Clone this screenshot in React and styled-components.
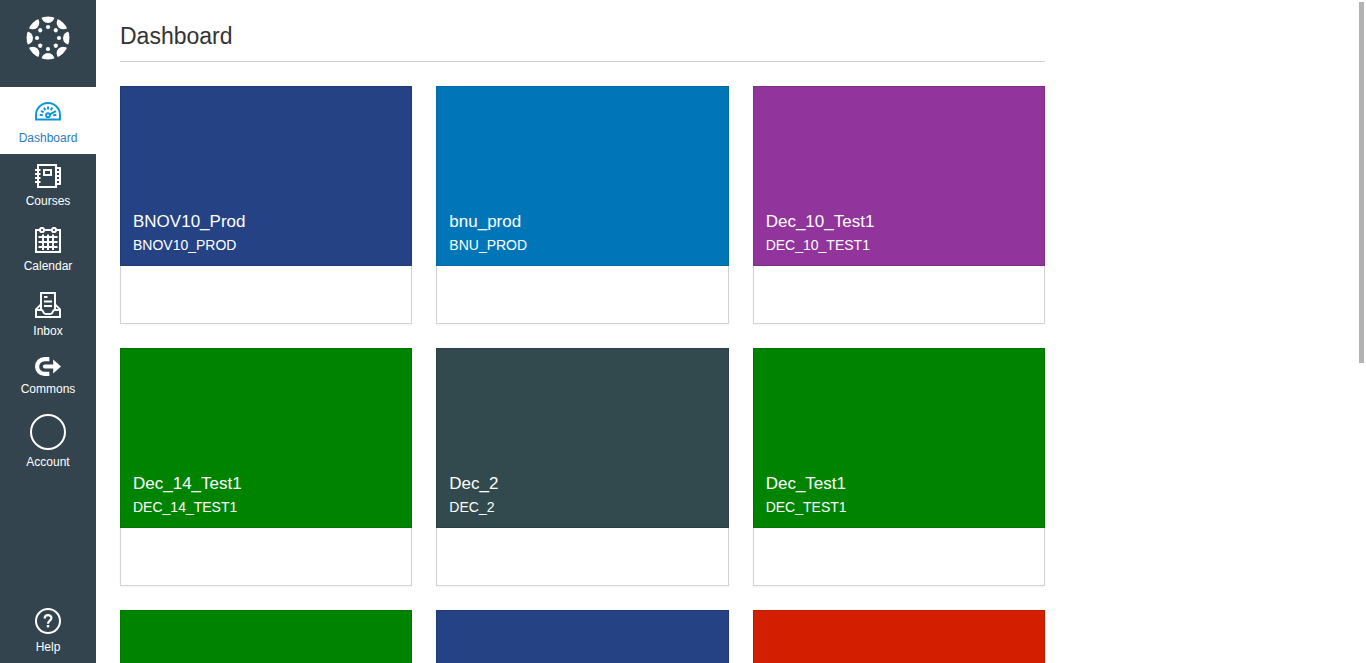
import React from "react";
import styled, { createGlobalStyle } from "styled-components";

const GlobalStyle = createGlobalStyle`
  *, *::before, *::after { box-sizing: border-box; }
  body {
    margin: 0;
    background: #fff;
    color: #333;
    font-family: "Liberation Sans", Arial, sans-serif;
    overflow: hidden;
  }
`;

const Shell = styled.div`
  position: relative;
  display: grid;
  grid-template-columns: 96px minmax(0, 1fr);
  height: 100vh;
`;

const Sidebar = styled.header`
  display: flex;
  flex-direction: column;
  min-height: 0;
  background: #34444f;
`;

const LogoLink = styled.a`
  display: flex;
  justify-content: center;
  height: 87px;
  padding-top: 16px;
  flex: none;
`;

const NavList = styled.ul`
  display: flex;
  flex-direction: column;
  flex: 1;
  margin: 0;
  padding: 0;
  list-style: none;
`;

const NavItem = styled.li`
  margin-top: ${(p) => (p.$last ? "auto" : "0")};
`;

const NavLink = styled.a`
  display: flex;
  flex-direction: column;
  align-items: center;
  gap: 5px;
  padding: 10px 0 8px;
  font-size: 12px;
  line-height: 16px;
  text-decoration: none;
  color: ${(p) => (p.$active ? "#2d7bbf" : "#fff")};
  background: ${(p) => (p.$active ? "#fff" : "transparent")};

  svg {
    display: block;
    color: ${(p) => (p.$active ? "#0a96d6" : "#fff")};
  }
`;

const Avatar = styled.span`
  width: 36px;
  height: 36px;
  margin: -1px 0;
  border: 2px solid #fff;
  border-radius: 50%;
`;

const Main = styled.main`
  min-width: 0;
  padding: 0 321px 24px 24px;
  overflow-y: auto;
  scrollbar-width: none;
`;

const PageTitle = styled.h1`
  margin: 0 0 24px;
  padding: 20px 0 9px;
  border-bottom: 1px solid #d3d3d3;
  font-size: 23px;
  line-height: 32px;
  font-weight: 400;
`;

const CardGrid = styled.div`
  display: grid;
  grid-template-columns: repeat(3, minmax(0, 1fr));
  gap: 24px;
`;

const Card = styled.article`
  display: flex;
  flex-direction: column;
  box-shadow: 0 1px 2px rgba(0, 0, 0, 0.05);
`;

const CardHero = styled.a`
  display: flex;
  flex-direction: column;
  justify-content: flex-end;
  height: 180px;
  padding: 0 12px 10px;
  border: 1px solid rgba(0, 0, 0, 0.1);
  background: ${(p) => p.$color};
  color: #fff;
  text-decoration: none;
`;

const CardTitle = styled.h2`
  margin: 0;
  font-size: 17px;
  line-height: 26px;
  font-weight: 400;
`;

const CardCode = styled.span`
  font-size: 14px;
  line-height: 20px;
`;

const CardFooter = styled.div`
  height: 58px;
  border: 1px solid #d3d3d3;
  border-top: 0;
`;

const ScrollThumb = styled.div`
  position: absolute;
  top: 2px;
  right: 2px;
  width: 5px;
  height: 54.5%;
  background: #b2b2b2;
`;

const ANGLES = [0, 45, 90, 135, 180, 225, 270, 315];

function Logo() {
  return (
    <svg width="44" height="44" viewBox="-22 -22 44 44" fill="#fff" aria-hidden="true">
      <clipPath id="logo-disc">
        <circle r="21.4" />
      </clipPath>
      <g clipPath="url(#logo-disc)">
        {ANGLES.map((a) => (
          <circle key={a} cy="-21.6" r="6.6" transform={`rotate(${a})`} />
        ))}
      </g>
      {ANGLES.map((a) => (
        <circle key={a} cy="-11" r="2.1" transform={`rotate(${a})`} />
      ))}
    </svg>
  );
}

function DashboardIcon() {
  return (
    <svg width="26" height="28" viewBox="0 -5 26 28" fill="none" stroke="currentColor" strokeWidth="1.9" aria-hidden="true">
      <path d="M1 17.5V13a12 12 0 0 1 24 0v4.5z" />
      <circle cx="13" cy="13.2" r="1.9" />
      <path d="M14.8 12.3 20.9 9.2M4.6 12.8l3.2.4M18.2 13.2l3.2-.4M6 8.9l2.6 1.5M8.9 5.6l1.5 2.7M13 4.4v3.2M17.3 5.5l-1.4 2.7" />
    </svg>
  );
}

function CoursesIcon() {
  return (
    <svg width="26" height="24" viewBox="0 0 26 24" fill="none" stroke="currentColor" strokeWidth="2" aria-hidden="true">
      <path d="M3 1h18v22H3z" />
      <path d="M9 6h7v5H9z" />
      <path d="M0 6h5.5M0 10h5.5M0 14h5.5M0 18h5.5" />
      <path d="M22 4h3v16h-3M22 8h3M22 12h3M22 16h3" />
    </svg>
  );
}

function CalendarIcon() {
  return (
    <svg width="26" height="26" viewBox="0 0 26 26" fill="none" stroke="currentColor" strokeWidth="2" aria-hidden="true">
      <path d="M4.5 3H1v22h24V3h-3.5M9.5 3h7" />
      <circle cx="7" cy="3" r="2.1" />
      <circle cx="19" cy="3" r="2.1" />
      <path d="M8 7.5v15.5M13 7.5v15.5M18 7.5v15.5M3.5 10h19M3.5 15h19M3.5 20h19" />
    </svg>
  );
}

function InboxIcon() {
  return (
    <svg width="26" height="26" viewBox="0 0 26 26" fill="none" stroke="currentColor" strokeWidth="2" aria-hidden="true">
      <path d="M6 17V1h14v16" />
      <path d="M9 5h3.5M9 9.5h8M9 14h8" />
      <path d="M6 12.4 1 17.4V25h24v-7.6l-5-5" />
      <path d="M1.5 18H6.5c2 0 1.5 4 4 4h5c2.5 0 2-4 4-4h5" />
    </svg>
  );
}

function CommonsIcon() {
  return (
    <svg width="26" height="19" viewBox="0 0 26 19" fill="currentColor" aria-hidden="true">
      <path d="M14.3 0H9.5a9.5 9.5 0 0 0 0 19h4.8v-4.2H9.5a5.3 5.3 0 0 1 0-10.6h4.8z" />
      <path d="M10 7.4h8.2v-5L26 9.5l-7.8 7.1v-5H10a2.1 2.1 0 0 1 0-4.2z" />
    </svg>
  );
}

function HelpIcon() {
  return (
    <svg width="26" height="26" viewBox="0 0 26 26" fill="none" stroke="currentColor" strokeWidth="2" aria-hidden="true">
      <circle cx="13" cy="13" r="12" />
      <path d="M9.7 10.6c0-4.6 6.7-4.4 6.7-.6 0 2.6-3.4 2.6-3.4 5.7" strokeWidth="2.2" />
      <path d="M13 17v2.4" strokeWidth="2.4" />
    </svg>
  );
}

const NAV = [
  { label: "Dashboard", icon: <DashboardIcon />, active: true },
  { label: "Courses", icon: <CoursesIcon /> },
  { label: "Calendar", icon: <CalendarIcon /> },
  { label: "Inbox", icon: <InboxIcon /> },
  { label: "Commons", icon: <CommonsIcon /> },
  { label: "Account", icon: <Avatar /> },
  { label: "Help", icon: <HelpIcon />, last: true },
];

const COURSES = [
  { title: "BNOV10_Prod", code: "BNOV10_PROD", color: "#254284" },
  { title: "bnu_prod", code: "BNU_PROD", color: "#0076b8" },
  { title: "Dec_10_Test1", code: "DEC_10_TEST1", color: "#91349b" },
  { title: "Dec_14_Test1", code: "DEC_14_TEST1", color: "#008400" },
  { title: "Dec_2", code: "DEC_2", color: "#324a4d" },
  { title: "Dec_Test1", code: "DEC_TEST1", color: "#008400" },
  { color: "#008400" },
  { color: "#254284" },
  { color: "#d41e00" },
];

export default function App() {
  return (
    <Shell>
      <GlobalStyle />
      <Sidebar>
        <LogoLink href="#home" aria-label="Home">
          <Logo />
        </LogoLink>
        <NavList>
          {NAV.map((item) => (
            <NavItem key={item.label} $last={item.last}>
              <NavLink
                href={`#${item.label.toLowerCase()}`}
                $active={item.active}
                aria-current={item.active ? "page" : undefined}
              >
                {item.icon}
                {item.label}
              </NavLink>
            </NavItem>
          ))}
        </NavList>
      </Sidebar>
      <Main>
        <PageTitle>Dashboard</PageTitle>
        <CardGrid>
          {COURSES.map((course, i) => (
            <Card key={i}>
              <CardHero href={`#course-${i + 1}`} $color={course.color}>
                {course.title && <CardTitle>{course.title}</CardTitle>}
                {course.code && <CardCode>{course.code}</CardCode>}
              </CardHero>
              <CardFooter />
            </Card>
          ))}
        </CardGrid>
      </Main>
      <ScrollThumb aria-hidden="true" />
    </Shell>
  );
}
